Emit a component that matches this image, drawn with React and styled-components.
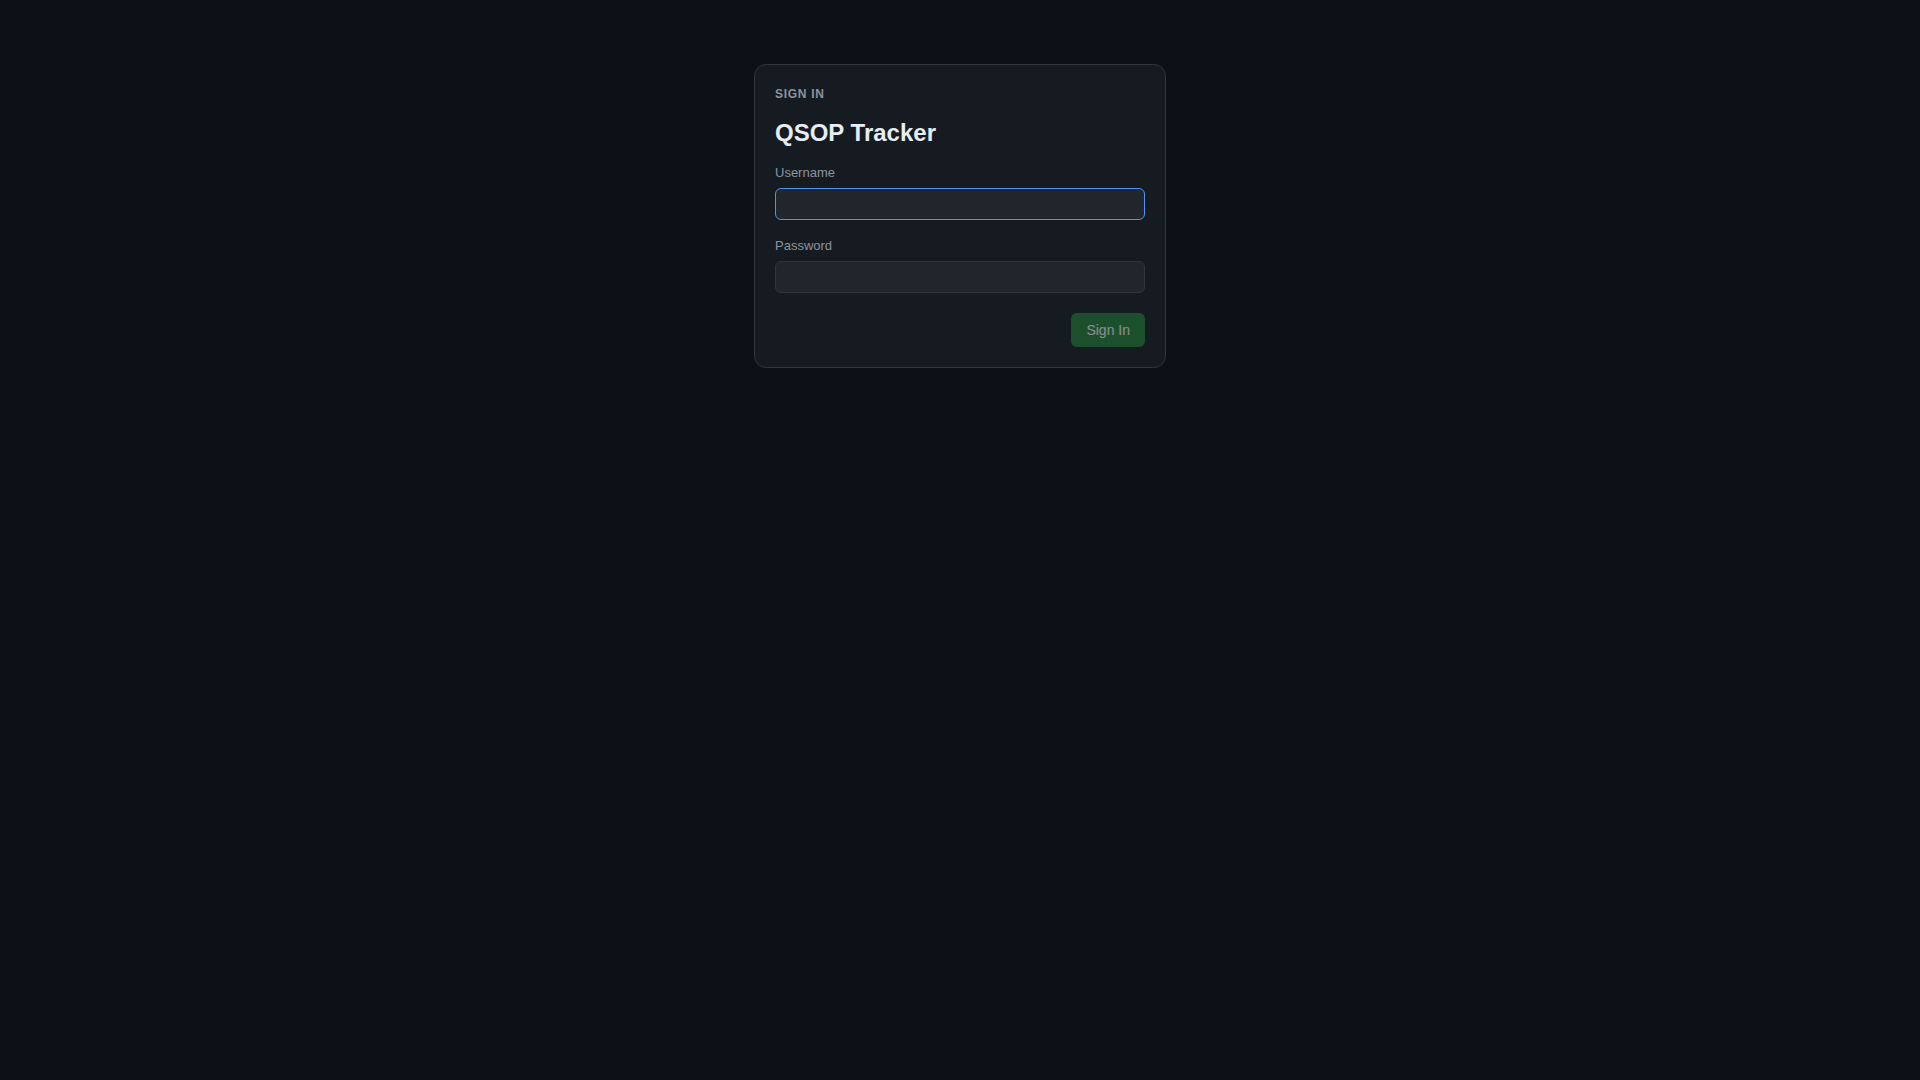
import React, { useEffect, useRef, useState } from 'react';
import styled, { createGlobalStyle } from 'styled-components';

const colors = {
    page: '#0d1117',
    card: '#161b22',
    border: '#30363d',
    field: '#21262d',
    focus: '#4a94f5',
    text: '#e6edf3',
    muted: '#8b949e',
    green: '#238636',
};

const GlobalStyle = createGlobalStyle`
    html, body {
        margin: 0;
        padding: 0;
        background-color: ${colors.page};
        font-family: "Liberation Sans", Arial, sans-serif;
    }
    * {
        box-sizing: border-box;
    }
`;

function SignIn() {
    const [username, setUsername] = useState('');
    const [password, setPassword] = useState('');
    const userRef = useRef(null);

    useEffect(() => {
        // the username field starts out focused
        userRef.current && userRef.current.focus();
    }, []);

    const canSubmit = username !== '' && password !== '';

    return (
        <Page>
            <GlobalStyle />
            <Card onSubmit={(e) => e.preventDefault()}>
                <Eyebrow>Sign In</Eyebrow>
                <Title>QSOP Tracker</Title>
                <Field>
                    <Label htmlFor="username">Username</Label>
                    <Input
                        id="username"
                        ref={userRef}
                        value={username}
                        onChange={(e) => setUsername(e.target.value)}
                    />
                </Field>
                <Field>
                    <Label htmlFor="password">Password</Label>
                    <Input
                        id="password"
                        type="password"
                        value={password}
                        onChange={(e) => setPassword(e.target.value)}
                    />
                </Field>
                <Actions>
                    <SubmitButton type="submit" disabled={!canSubmit}>Sign In</SubmitButton>
                </Actions>
            </Card>
        </Page>
    );
}

export const Page = styled.div`
    min-height: 100vh;
    display: flex;
    justify-content: center;
    align-items: flex-start;
    padding-top: 64px;
    background-color: ${colors.page};
`;

export const Card = styled.form`
    width: 412px;
    display: flex;
    flex-direction: column;
    padding: 21px 20px 20px;
    background-color: ${colors.card};
    border: 1px solid ${colors.border};
    border-radius: 12px;
`;

export const Eyebrow = styled.div`
    font-size: 12px;
    line-height: 16px;
    font-weight: 700;
    letter-spacing: 0.06em;
    text-transform: uppercase;
    color: ${colors.muted};
`;

export const Title = styled.h1`
    margin: 16px 0 0;
    font-size: 24px;
    line-height: 29px;
    font-weight: 700;
    color: ${colors.text};
`;

export const Field = styled.div`
    display: flex;
    flex-direction: column;
    gap: 7px;
    margin-top: 18px;
`;

export const Label = styled.label`
    font-size: 13px;
    line-height: 16px;
    color: ${colors.muted};
`;

export const Input = styled.input`
    width: 100%;
    height: 32px;
    padding: 0 10px;
    font-family: inherit;
    font-size: 14px;
    color: ${colors.text};
    background-color: ${colors.field};
    border: 1px solid ${colors.border};
    border-radius: 6px;
    outline: none;

    &:focus {
        border-color: ${colors.focus};
    }
`;

export const Actions = styled.div`
    display: flex;
    justify-content: flex-end;
    margin-top: 20px;
`;

export const SubmitButton = styled.button`
    height: 34px;
    padding: 0 15px;
    font-family: inherit;
    font-size: 14px;
    color: #ffffff;
    background-color: ${colors.green};
    border: none;
    border-radius: 6px;
    cursor: pointer;

    &:disabled {
        opacity: 0.5;
        cursor: default;
    }
`;

export default SignIn;
